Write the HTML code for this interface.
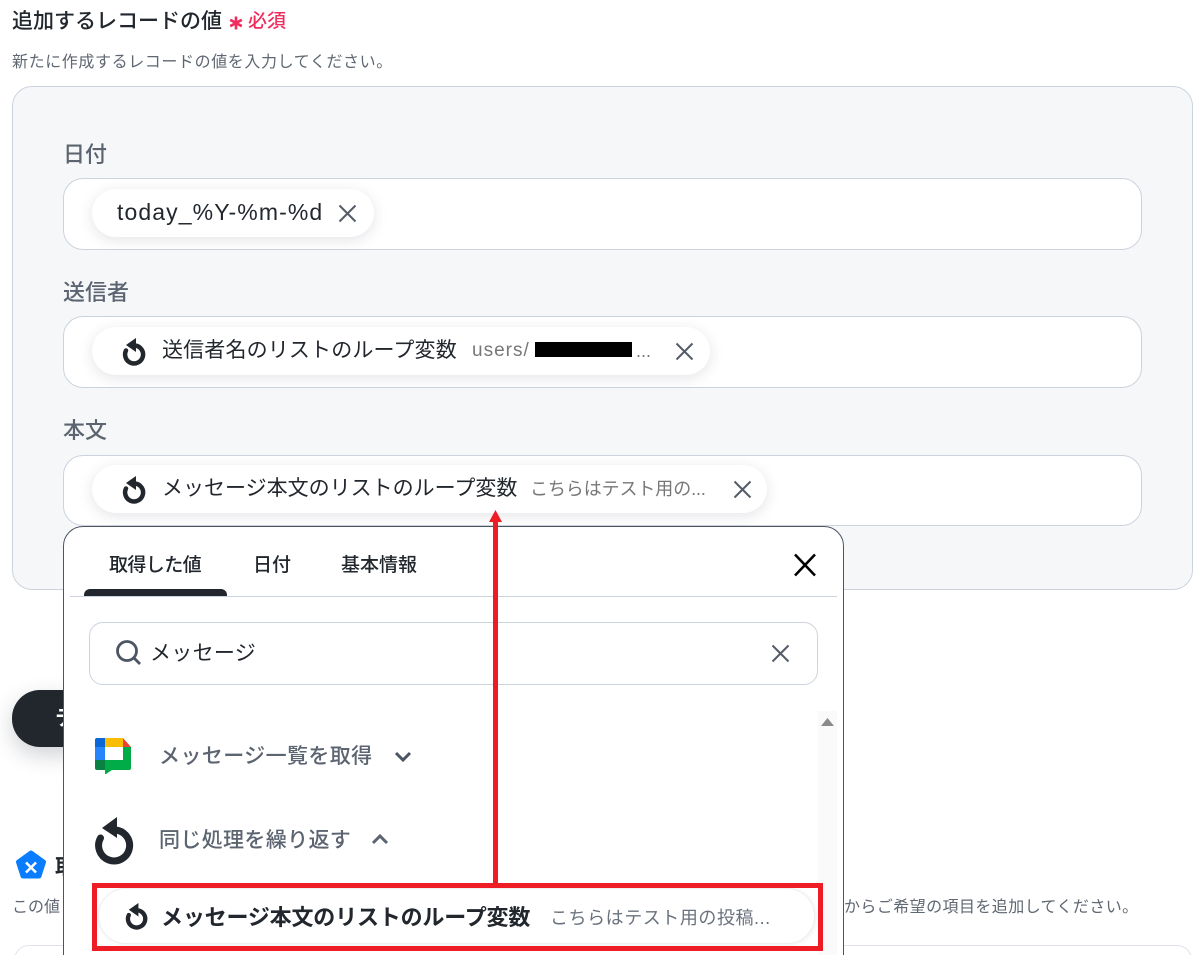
<!DOCTYPE html>
<html lang="ja"><head><meta charset="utf-8"><style>
html,body{margin:0;padding:0;background:#fff}
#r{position:relative;width:1202px;height:955px;overflow:hidden;background:#fff;font-family:"Liberation Sans","Noto Sans CJK JP",sans-serif;color:#22272e}
#r>*,.a{position:absolute;box-sizing:border-box}
.t{white-space:nowrap;line-height:1}
.inp{left:63px;width:1079px;background:#fff;border:1px solid #ccd3de;border-radius:20px}
.chip{left:92px;height:48px;background:#fff;border-radius:24px;box-shadow:0 3px 14px rgba(40,50,70,.13)}
.lbl{left:63px;font-size:22px;font-weight:500;color:#5b6470}
svg{display:block;overflow:visible}
</style></head><body><div id="r">
<div class="t" style="left:12px;top:11px;font-size:21px;font-weight:500;color:#22272e">追加するレコードの値</div>
<svg style="left:228px;top:15px" width="16" height="16" viewBox="0 0 16 16"><path d="M8 1.500v13M2.200 4.800l11.600 6.400M13.800 4.800L2.200 11.200" stroke="#f02d5e" stroke-width="2.600"/></svg>
<div class="t" style="left:248px;top:12px;font-size:19px;font-weight:500;color:#f02d5e">必須</div>
<div class="t" style="left:12px;top:55px;font-size:16px;letter-spacing:.6px;color:#5f6772">新たに作成するレコードの値を入力してください。</div>

<div style="left:12px;top:86px;width:1181px;height:504px;background:#f6f7f9;border:1px solid #ccd3de;border-radius:20px"></div>
<div class="t lbl" style="top:144px">日付</div>
<div class="inp" style="top:178px;height:72px"></div>
<div class="chip" style="top:189px;width:282px"></div>
<div class="t" style="left:117px;top:201px;font-size:23px;letter-spacing:1.1px;color:#22272e">today_%Y-%m-%d</div>
<svg style="left:338px;top:204px" width="19" height="19" viewBox="0 0 19 19"><path d="M1.500 1.500l16 16M17.500 1.500l-16 16" stroke="#545c68" stroke-width="2"/></svg>

<div class="t lbl" style="top:282px">送信者</div>
<div class="inp" style="top:316px;height:72px"></div>
<div class="chip" style="top:327px;width:618px"></div>
<svg style="left:121px;top:337px" width="26" height="29" viewBox="0 0 26 29"><path d="M5 13.500a9 9 0 1 0 9-5" fill="none" stroke="#22272e" stroke-width="4.500" stroke-linecap="round"/><path d="M15 1v14L5 8z" fill="#22272e"/></svg>
<div class="t" style="left:162px;top:340px;font-size:21px;letter-spacing:.15px;color:#22272e">送信者名のリストのループ変数</div>
<div class="t" style="left:472px;top:341px;font-size:19px;letter-spacing:1px;color:#777">users/</div>
<div style="left:535px;top:342px;width:97px;height:15px;background:#000"></div>
<div class="t" style="left:636px;top:342px;font-size:18px;color:#777">...</div>
<svg style="left:675px;top:342px" width="19" height="19" viewBox="0 0 19 19"><path d="M1.500 1.500l16 16M17.500 1.500l-16 16" stroke="#545c68" stroke-width="2"/></svg>

<div class="t lbl" style="top:420px">本文</div>
<div class="inp" style="top:455px;height:71px"></div>
<div class="chip" style="top:465px;width:675px"></div>
<svg style="left:121px;top:475px" width="26" height="29" viewBox="0 0 26 29"><path d="M5 13.500a9 9 0 1 0 9-5" fill="none" stroke="#22272e" stroke-width="4.500" stroke-linecap="round"/><path d="M15 1v14L5 8z" fill="#22272e"/></svg>
<div class="t" style="left:162px;top:478px;font-size:21px;color:#22272e">メッセージ本文のリストのループ変数</div>
<div class="t" style="left:530px;top:480px;font-size:18px;letter-spacing:-.1px;color:#777">こちらはテスト用の...</div>
<svg style="left:733px;top:480px" width="19" height="19" viewBox="0 0 19 19"><path d="M1.500 1.500l16 16M17.500 1.500l-16 16" stroke="#545c68" stroke-width="2"/></svg>

<div style="left:12px;top:690px;width:120px;height:57px;background:#22272e;border-radius:28px;box-shadow:0 8px 22px rgba(40,50,70,.22)"></div>
<div class="t" style="left:55px;top:708px;font-size:21px;font-weight:700;color:#fff">テ</div>

<svg style="left:15px;top:849px" width="32" height="32" viewBox="0 0 32 32"><path d="M16 4L28.500 13 24 27H8L3.500 13z" fill="#0a7cff" stroke="#0a7cff" stroke-width="5" stroke-linejoin="round"/><path d="M11 13.500l10 10M21 13.500l-10 10" stroke="#fff" stroke-width="2.500"/></svg>
<div class="t" style="left:55px;top:857px;font-size:21px;font-weight:700;color:#22272e">取</div>
<div class="t" style="left:12px;top:900px;font-size:16px;color:#5f6772">この値</div>
<div class="t" style="left:844px;top:900px;font-size:16px;letter-spacing:.42px;color:#5f6772">からご希望の項目を追加してください。</div>
<div style="left:14px;top:945px;width:1178px;height:30px;border:1px solid #dfe3e9;border-radius:20px"></div>

<div style="left:63px;top:526px;width:781px;height:460px;background:#fff;border:1px solid #4c5563;border-radius:20px">
<div class="a t" style="left:45px;top:29px;font-size:19px;letter-spacing:-.6px;font-weight:500;color:#22272e">取得した値</div>
<div class="a t" style="left:189px;top:29px;font-size:19px;font-weight:500;color:#22272e">日付</div>
<div class="a t" style="left:277px;top:29px;font-size:19px;font-weight:500;color:#22272e">基本情報</div>
<div class="a" style="left:20px;top:62px;width:143px;height:8px;background:#22272e;border-radius:6px 6px 0 0"></div>
<div class="a" style="left:6px;top:69px;width:767px;height:1px;background:#ccd3de"></div>
<svg class="a" style="left:729px;top:26px" width="24" height="24" viewBox="0 0 24 24"><path d="M2 1.500l20 21M22 1.500L2 22.500" stroke="#000" stroke-width="2.600"/></svg>
<div class="a" style="left:25px;top:95px;width:729px;height:63px;border:1px solid #ccd3de;border-radius:14px"></div>
<svg class="a" style="left:52px;top:113px" width="26" height="26" viewBox="0 0 26 26"><circle cx="11" cy="11" r="9.500" fill="none" stroke="#4c5563" stroke-width="2.800"/><path d="M18 18l6 6" stroke="#4c5563" stroke-width="2.800"/></svg>
<div class="a t" style="left:86px;top:116px;font-size:21px;letter-spacing:.3px;color:#22272e">メッセージ</div>
<svg class="a" style="left:707px;top:117px" width="19" height="19" viewBox="0 0 19 19"><path d="M1.500 1.500l16 16M17.500 1.500l-16 16" stroke="#545c68" stroke-width="2"/></svg>
<div class="a" style="left:754px;top:184px;width:19px;height:280px;background:#fafafb"></div>
<svg class="a" style="left:757px;top:191px" width="13" height="8" viewBox="0 0 13 8"><path d="M6.500 0L13 8H0z" fill="#8a8a8a"/></svg>

<svg class="a" style="left:31px;top:211px" width="36" height="36" viewBox="0 0 36 36">
<path d="M10 0H28V9H10z" fill="#fbbc04"/><path d="M28 0l8 9H28z" fill="#ea4335"/><path d="M0 2a2 2 0 0 1 2-2H10V9H0z" fill="#0b66d8"/><path d="M0 9H10V22H0z" fill="#2684fc"/><path d="M0 22H10V32H2a2 2 0 0 1-2-2z" fill="#0a8043"/>
<path d="M28 9h8v21a2 2 0 0 1-2 2H17l-6 4h-1V22h18z" fill="#00ac47"/></svg>
<div class="a t" style="left:95px;top:219px;font-size:21px;letter-spacing:.4px;font-weight:500;color:#5b6470">メッセージ一覧を取得</div>
<svg class="a" style="left:330px;top:224px" width="18" height="12" viewBox="0 0 18 12"><path d="M2 2l7 7 7-7" fill="none" stroke="#4c5563" stroke-width="3"/></svg>

<svg class="a" style="left:30px;top:289px" width="40" height="46" viewBox="0 0 40 46"><path d="M6.500 22a15.500 15.500 0 1 0 15-8" fill="none" stroke="#22272e" stroke-width="7" stroke-linecap="round"/><path d="M23 1v21L8 12z" fill="#22272e"/></svg>
<div class="a t" style="left:95px;top:303px;font-size:21px;letter-spacing:.35px;font-weight:500;color:#5b6470">同じ処理を繰り返す</div>
<svg class="a" style="left:307px;top:306px" width="18" height="12" viewBox="0 0 18 12"><path d="M2 10l7-7 7 7" fill="none" stroke="#5b6470" stroke-width="3"/></svg>

<div class="a" style="left:34px;top:361px;width:717px;height:56px;border:1px solid #eceef1;border-radius:28px;box-shadow:1px 1px 5px rgba(40,50,70,.08)"></div>
<svg class="a" style="left:60px;top:375px" width="25" height="28" viewBox="0 0 26 29"><path d="M5 13.500a9 9 0 1 0 9-5" fill="none" stroke="#22272e" stroke-width="4.500" stroke-linecap="round"/><path d="M15 1v14L5 8z" fill="#22272e"/></svg>
<div class="a t" style="left:97px;top:380px;font-size:22px;letter-spacing:-.18px;font-weight:700;color:#22272e">メッセージ本文のリストのループ変数</div>
<div class="a t" style="left:486px;top:382px;font-size:18px;letter-spacing:.55px;color:#6a727d">こちらはテスト用の投稿...</div>
</div>

<div style="left:92px;top:883px;width:731px;height:68px;border:5px solid #ee1c25"></div>
<div style="left:493px;top:520px;width:5px;height:364px;background:#ee1c25"></div>
<svg style="left:489px;top:510px" width="13" height="12" viewBox="0 0 13 12"><path d="M6.500 0L13 12H0z" fill="#ee1c25"/></svg>
</div></body></html>
